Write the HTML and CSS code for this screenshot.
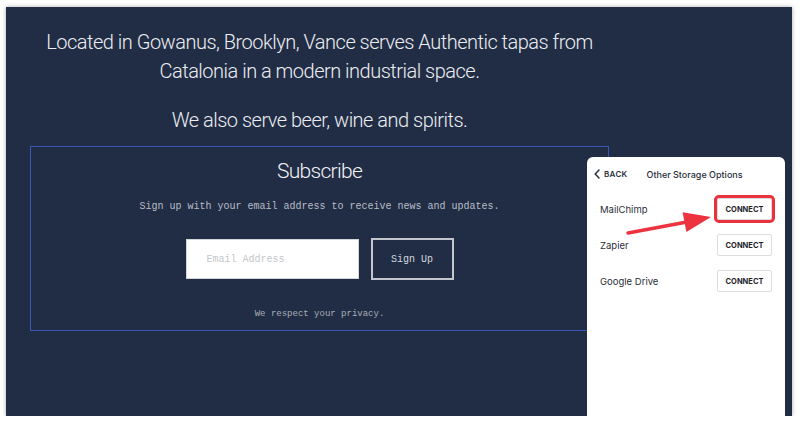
FILE: index.html
```html
<!DOCTYPE html>
<html lang="en">

<head>
    <meta charset="UTF-8">
    <meta name="viewport" content="width=device-width, initial-scale=1.0">
    <title>Vance</title>
    <link rel="stylesheet" href="styles.css">
</head>

<body>
    <div class="frame">
        <div class="site">
            <p class="intro">Located in Gowanus, Brooklyn, Vance serves Authentic tapas from<br>Catalonia in a modern industrial space.</p>
            <p class="intro">We also serve beer, wine and spirits.</p>

            <div class="subscribe">
                <h2>Subscribe</h2>
                <p class="desc">Sign up with your email address to receive news and updates.</p>
                <form class="signup">
                    <input type="email" placeholder="Email Address">
                    <button type="button">Sign Up</button>
                </form>
                <p class="privacy">We respect your privacy.</p>
            </div>
        </div>

        <div class="panel">
            <div class="panel-head">
                <span class="back">
                    <svg width="6" height="10" viewBox="0 0 6 10"><path d="M5 1 L1.2 5 L5 9" fill="none" stroke="#2a2f3a" stroke-width="1.5" stroke-linecap="round" stroke-linejoin="round"/></svg>
                    BACK
                </span>
                <span class="panel-title">Other Storage Options</span>
            </div>
            <div class="row"><span>MailChimp</span><button class="connect highlight">CONNECT</button></div>
            <div class="row"><span>Zapier</span><button class="connect">CONNECT</button></div>
            <div class="row"><span>Google Drive</span><button class="connect">CONNECT</button></div>

            <svg class="arrow" width="198" height="120" viewBox="0 0 198 120">
                <line x1="41" y1="76" x2="100" y2="65" stroke="#ee3340" stroke-width="3.5" stroke-linecap="round"/>
                <polygon points="124,60 99.4,75 95.6,55.3" fill="#ee3340"/>
            </svg>
        </div>
    </div>
</body>

</html>
```

FILE: styles.css
```css
body {
    margin: 0;
    padding: 0;
    background-color: #ffffff;
}

.frame {
    position: relative;
    margin: 7px 0 0 6px;
    width: 786px;
    height: 409px;
    background-color: #212d45;
    box-shadow: 0 0 4px rgba(0, 0, 0, 0.35);
    overflow: hidden;
}

.site {
    width: 627px;
    padding-top: 21px;
    text-align: center;
    color: #eef0f3;
}

.intro {
    margin: 0 0 20px;
    font-family: "Roboto", sans-serif;
    font-weight: 300;
    font-size: 20px;
    letter-spacing: -0.5px;
    line-height: 29px;
    color: #eceef2;
}

.intro + .intro {
    margin-bottom: 11px;
}

.subscribe {
    margin: 0 24px;
    height: 183px;
    border: 1px solid #3b56b5;
    box-sizing: content-box;
}

.subscribe h2 {
    margin: 10px 0 0;
    font-family: "Roboto", sans-serif;
    font-weight: 300;
    font-size: 21px;
    letter-spacing: -0.7px;
    line-height: 28px;
    color: #f2f3f6;
}

.desc {
    margin: 15px 0 0;
    font-family: "Liberation Mono", monospace;
    font-size: 10px;
    line-height: 14px;
    color: #b9bdc6;
}

.signup {
    display: flex;
    justify-content: center;
    align-items: center;
    gap: 12px;
    margin-top: 24px;
}

.signup input {
    width: 173px;
    height: 40px;
    box-sizing: border-box;
    padding: 0 20px;
    border: 1px solid #d4d6da;
    border-radius: 0;
    background: #ffffff;
    font-family: "Liberation Mono", monospace;
    font-size: 10px;
}

.signup input::placeholder {
    color: #c4c6ca;
}

.signup button {
    width: 83px;
    height: 42px;
    box-sizing: border-box;
    border: 2px solid #c3c6cc;
    background: transparent;
    color: #d3d6dd;
    font-family: "Liberation Mono", monospace;
    font-size: 10px;
}

.privacy {
    margin: 28px 0 0;
    font-family: "Liberation Mono", monospace;
    font-size: 9px;
    line-height: 12px;
    color: #a9aeb7;
}

.panel {
    position: absolute;
    left: 581px;
    top: 150px;
    width: 198px;
    bottom: 0;
    background-color: #ffffff;
    border-radius: 6px 6px 0 0;
    font-family: "Inter", "Roboto", sans-serif;
    color: #2a2f3a;
}

.panel-head {
    display: flex;
    align-items: center;
    height: 34px;
    padding-left: 7px;
    gap: 19px;
}

.back {
    display: flex;
    align-items: center;
    gap: 4px;
    font-size: 8px;
    font-weight: 600;
    letter-spacing: 0.3px;
}

.panel-title {
    font-size: 9px;
    font-weight: 500;
}

.row {
    display: flex;
    align-items: center;
    justify-content: space-between;
    height: 36px;
    padding: 0 13px;
    font-size: 9.5px;
}

.connect {
    width: 55px;
    height: 22px;
    padding: 0;
    border: 1px solid #dcdde0;
    border-radius: 2px;
    background: #ffffff;
    font-family: "Inter", "Roboto", sans-serif;
    font-size: 7.5px;
    font-weight: 700;
    color: #1f232b;
}

.highlight {
    outline: 3px solid #e9323c;
}

.arrow {
    position: absolute;
    left: 0;
    top: 0;
    pointer-events: none;
}
```
